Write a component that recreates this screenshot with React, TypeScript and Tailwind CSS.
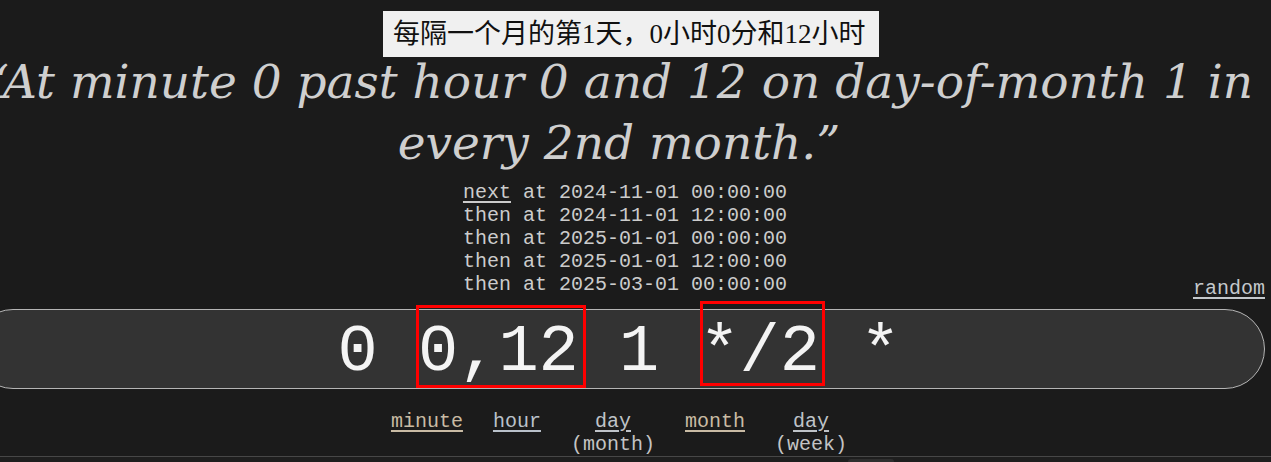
const dates = [
  { label: "next", at: "2024-11-01 00:00:00" },
  { label: "then", at: "2024-11-01 12:00:00" },
  { label: "then", at: "2025-01-01 00:00:00" },
  { label: "then", at: "2025-01-01 12:00:00" },
  { label: "then", at: "2025-03-01 00:00:00" },
];

const parts = [
  { name: "minute", sub: "", tone: "text-[#c9bba4]" },
  { name: "hour", sub: "", tone: "text-[#b9c1ca]" },
  { name: "day", sub: "(month)", tone: "text-[#bfc3c8]" },
  { name: "month", sub: "", tone: "text-[#c9bba4]" },
  { name: "day", sub: "(week)", tone: "text-[#bfc3c8]" },
];

const mono = "font-['Liberation_Mono','Courier_New',monospace]";

function Gap() {
  return <span className="w-[40.2px] shrink-0" />;
}

export default function App() {
  return (
    <main className="relative flex h-[462px] w-full flex-col overflow-hidden bg-[#1b1b1b]">
      <div className="ml-[-27px] flex w-[1292px] flex-col items-center pt-[51px]">
        <p className="text-center font-['DejaVu_Serif',Georgia,serif] text-[47px] italic leading-[61px] text-[#cfcfcf]">
          “At minute 0 past hour 0 and 12 on day-of-month 1 in every 2nd month.”
        </p>

        <div className="mt-[8px] grid w-full grid-cols-[1fr_auto_1fr]">
          <div />
          <div className={`${mono} pl-[12px] text-[20px] leading-[23px] text-[#cccccc] whitespace-pre`}>
            {dates.map((d, i) => (
              <div key={i}>
                <span className={i === 0 ? "underline decoration-[2px] underline-offset-[3px]" : ""}>{d.label}</span>
                {" at " + d.at}
              </div>
            ))}
          </div>
          <div className={`${mono} mb-[-4px] self-end justify-self-end text-[20px] leading-[23px] text-[#c4c8cc] underline decoration-[2px] underline-offset-[3px]`}>
            random
          </div>
        </div>

        <div className={`${mono} mt-[13px] flex h-[80px] w-full items-stretch justify-center rounded-full border border-[#b5b5b5] bg-[#333333] text-[67px] leading-none text-[#f4f4f4]`}>
          <span className="flex items-center pt-[6px]">0</span>
          <Gap />
          <span className="relative flex items-center">
            <span className="pt-[6px]">0,12</span>
            <span className="absolute top-[-5px] bottom-0 left-[-2px] right-[-7px] border-[3px] border-[#ff0000]" />
          </span>
          <Gap />
          <span className="flex items-center pt-[6px]">1</span>
          <Gap />
          <span className="relative flex items-center">
            <span className="pt-[6px]">*/2</span>
            <span className="absolute top-[-9px] bottom-[2px] left-[1px] right-[-5px] border-[3px] border-[#ff0000]" />
          </span>
          <Gap />
          <span className="flex items-center pt-[6px]">*</span>
        </div>

        <div className={`${mono} mt-[21px] flex gap-[30px] text-[20px] leading-[23px]`}>
          {parts.map((p, i) => (
            <div key={i} className={`flex flex-col items-center ${p.tone}`}>
              <span className="underline decoration-[2px] underline-offset-[3px]">{p.name}</span>
              {p.sub && <span className="text-[#c4c4c4]">{p.sub}</span>}
            </div>
          ))}
        </div>
      </div>

      <div className="mt-auto flex h-[7px] border-t border-[#474747] bg-[#1e1e1e] pl-[848px]">
        <div className="mt-[2px] h-[4px] w-[46px] rounded-t-[3px] bg-[#2e2e2e]" />
      </div>

      <div className="absolute left-[383px] top-[11px] flex h-[46px] w-[496px] items-center bg-[#f0f0f0] pl-[10px] font-['Liberation_Serif','Noto_Sans_CJK_SC',serif] text-[27px] leading-none text-[#111111]">
        每隔一个月的第1天，0小时0分和12小时
      </div>
    </main>
  );
}
